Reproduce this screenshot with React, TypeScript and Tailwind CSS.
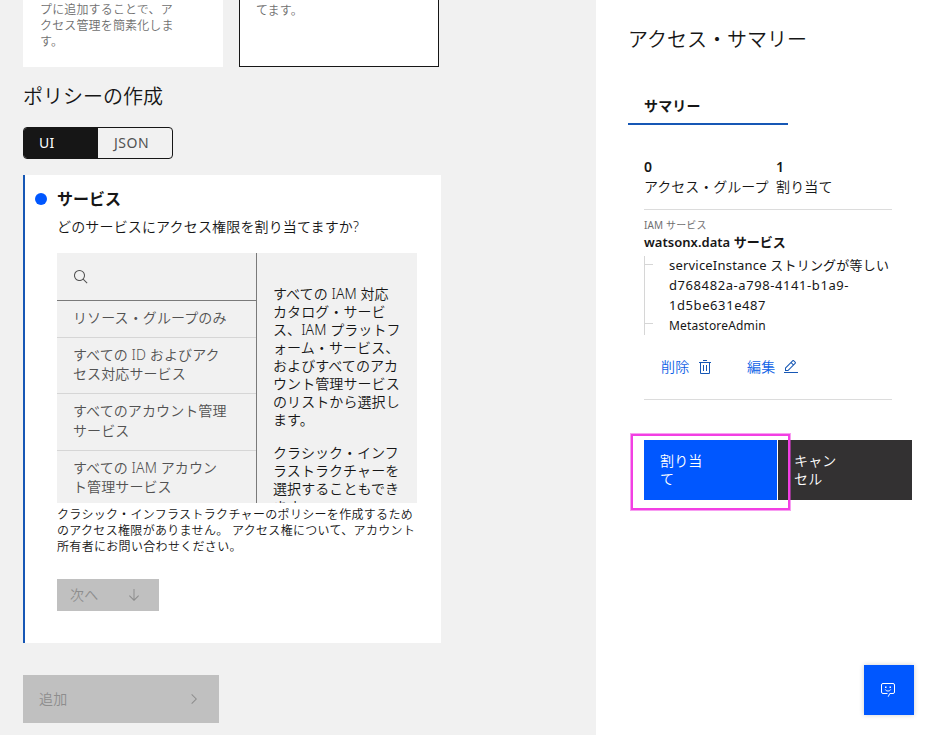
import { clsx } from 'clsx';
import type { ReactNode } from 'react';

const SERVICES: string[][] = [
  ['リソース・グループのみ'],
  ['すべての ID およびアク', 'セス対応サービス'],
  ['すべてのアカウント管理', 'サービス'],
  ['すべての IAM アカウン', 'ト管理サービス'],
];

const HELP: string[][] = [
  [
    'すべての IAM 対応',
    'カタログ・サービ',
    'ス、IAM プラットフ',
    'ォーム・サービス、',
    'およびすべてのアカ',
    'ウント管理サービス',
    'のリストから選択し',
    'ます。',
  ],
  ['クラシック・インフ', 'ラストラクチャーを', '選択することもでき', 'ます。'],
];

export default function App(): JSX.Element {
  return (
    <div className="relative flex h-[735px] w-[930px] overflow-hidden bg-[#f1f1f1] font-['Noto_Sans','Noto_Sans_CJK_JP',sans-serif] text-sm font-[350] tracking-[0.16px] whitespace-nowrap text-[#161616]">
      <main className="w-[596px] shrink-0 pl-[23px]">
        <div className="flex gap-4 text-xs/[16px] tracking-[0.15px] text-[#6f6f6f]">
          <div className="h-[67px] w-[200px] bg-white pt-[2.4px] pl-[17px]">
            <Lines lines={['プに追加することで、ア', 'クセス管理を簡素化しま', 'す。']} />
          </div>
          <div className="h-[67px] w-[200px] border border-t-0 border-[#161616] bg-white pt-[3px] pl-4">
            <Lines lines={['てます。']} />
          </div>
        </div>

        <h2 className="mt-4 text-xl/[28px] font-[350] tracking-normal">ポリシーの作成</h2>

        <div className="mt-4 flex h-8 w-[150px] overflow-hidden rounded border border-[#161616] font-normal">
          <button type="button" className="w-[74px] bg-[#161616] pl-[15px] text-left text-white">
            UI
          </button>
          <button type="button" className="flex-1 pl-4 text-left tracking-[0.5px] text-[#525252]">
            JSON
          </button>
        </div>

        <ServicePanel />

        <button
          type="button"
          className="mt-8 flex h-12 w-[196px] items-center justify-between bg-[#c0c0c0] pr-[17px] pb-px pl-4 text-[#8d8d8d]"
        >
          追加
          <Icon>
            <path d="M22 16 12 26 10.6 24.6 19.2 16 10.6 7.4 12 6z" />
          </Icon>
        </button>
      </main>

      <Summary />

      <button
        type="button"
        aria-label="チャット"
        className="absolute top-[665px] left-[864px] flex size-[50px] items-center justify-center bg-[#0057ff] text-white shadow-[0_0_5px_rgba(0,0,0,0.2)]"
      >
        <svg width="16" height="16" viewBox="0 0 16 16" fill="none" stroke="currentColor" className="mr-[2px]">
          <path d="M8.2 14.7 9.8 11.5H13a1.5 1.5 0 0 0 1.5-1.5V3A1.5 1.5 0 0 0 13 1.500H3A1.5 1.5 0 0 0 1.5 3v7A1.5 1.5 0 0 0 3 11.500H7.500" />
          <path d="M5.300 7.500c.4 1 1.400 1.500 2.700 1.500s2.300-.5 2.700-1.500" />
          <path d="M5 4.500h1.500v1.500H5zM9.500 4.500H11v1.500H9.500z" fill="currentColor" stroke="none" />
        </svg>
      </button>
    </div>
  );
}

function ServicePanel(): JSX.Element {
  return (
    <section className="mt-4 h-[468px] w-[418px] border-l-2 border-[#1657b5] bg-white pr-6 pl-[10px]">
      <div className="flex items-center gap-[10px] pt-3">
        <span className="size-3 rounded-full bg-[#0057ff]" />
        <h3 className="text-base/[24px] font-semibold tracking-normal">サービス</h3>
      </div>
      <div className="pl-[22px]">
        <p className="mt-[6px] leading-5">どのサービスにアクセス権限を割り当てますか?</p>

        <div className="mt-4 flex h-[250px] overflow-hidden bg-[#f1f1f1]">
          <div className="w-[200px] shrink-0 border-r border-[#7a7a7a] text-[#525252]">
            <div className="flex h-12 items-center border-b border-[#7a7a7a] pl-4">
              <Icon>
                <path d="M29 27.586l-7.552-7.552a11.018 11.018 0 1 0-1.414 1.414L27.586 29ZM4 13a9 9 0 1 1 9 9A9.01 9.01 0 0 1 4 13Z" />
              </Icon>
            </div>
            <ul>
              {SERVICES.map((lines) => (
                <li
                  key={lines[0]}
                  className="border-b border-[#d6d6d6] pt-[7px] pb-[9.2px] pl-4 leading-[19.6px] tracking-[0.1px]"
                >
                  <Lines lines={lines} />
                </li>
              ))}
            </ul>
          </div>
          <div className="pt-8 pl-4 leading-[18px] tracking-[0.08px]">
            {HELP.map((lines) => (
              <div key={lines[0]} className="mb-[15px]">
                <Lines lines={lines} />
              </div>
            ))}
          </div>
        </div>

        <div className="mt-1 text-xs/[16px] tracking-[0.32px]">
          <Lines
            lines={[
              'クラシック・インフラストラクチャーのポリシーを作成するため',
              'のアクセス権限がありません。 アクセス権について、アカウント',
              '所有者にお問い合わせください。',
            ]}
          />
        </div>

        <button
          type="button"
          className="mt-6 flex h-8 w-[102px] items-center justify-between bg-[#c0c0c0] pr-[17px] pl-[13px] text-[#8d8d8d]"
        >
          次へ
          <Icon>
            <path d="M24.590 16.590 17 24.170 17 4 15 4 15 24.170 7.410 16.590 6 18 16 28 26 18z" />
          </Icon>
        </button>
      </div>
    </section>
  );
}

function Summary(): JSX.Element {
  return (
    <aside className="flex-1 bg-white pt-[26px] pl-8">
      <h2 className="text-xl/[28px] font-[350] tracking-normal">アクセス・サマリー</h2>
      <div className="mt-[41px] h-[30px] w-40 border-b-2 border-[#1657b5] pt-px pl-4 font-semibold">サマリー</div>

      <div className="pl-4">
        <dl className="mt-8 flex h-[53px] w-[248px] border-b border-[#dcdcdc] leading-5">
          <div className="w-[132px]">
            <dt className="font-semibold">0</dt>
            <dd className="tracking-[0px]">アクセス・グループ</dd>
          </div>
          <div>
            <dt className="font-semibold">1</dt>
            <dd>割り当て</dd>
          </div>
        </dl>

        <p className="mt-[7px] text-[10px]/[16px] font-normal tracking-[0.15px] text-[#6f6f6f]">IAM サービス</p>
        <p className="text-[13px]/[18px] font-semibold tracking-[0.03px]">watsonx.data サービス</p>

        <ul className="mt-[5px] h-[79px] w-[248px] border-l border-[#d6d6d6] text-[13px]/[20px] font-normal">
          <Branch className="h-[59px]">
            <div className="-mt-px tracking-[0.2px]">serviceInstance ストリングが等しい</div>
            <div className="tracking-[0.58px]">
              <Lines lines={['d768482a-a798-4141-b1a9-', '1d5be631e487']} />
            </div>
          </Branch>
          <Branch>
            <span className="text-xs/[20px] tracking-[0.18px]">MetastoreAdmin</span>
          </Branch>
        </ul>

        <div className="mt-4 flex h-[49px] w-[248px] border-b border-[#dcdcdc] pl-[17px] text-[#0f62e6]">
          <button type="button" className="flex h-8 w-[86px] items-center gap-2">
            削除
            <Icon className="text-[#1657b5]">
              <path d="M12 12h2v12h-2zM18 12h2v12h-2zM12 2h8v2h-8z" />
              <path d="M4 6v2h2v20a2 2 0 0 0 2 2h16a2 2 0 0 0 2-2V8h2V6zM8 28V8h16v20z" />
            </Icon>
          </button>
          <button type="button" className="flex h-8 items-center gap-2">
            編集
            <Icon className="text-[#1657b5]">
              <path d="M2 26h28v2H2z" />
              <path d="M25.400 9c.8-.8.8-2 0-2.800l-3.600-3.600c-.8-.8-2-.8-2.800 0l-15 15V24h6.400zM20.400 4 24 7.600l-3 3L17.400 7zM6 22v-3.600l10-10 3.600 3.600-10 10z" />
            </Icon>
          </button>
        </div>

        <div className="relative mt-10 flex h-[60px] gap-px text-left leading-[18px] text-white">
          <button type="button" className="w-[133px] bg-[#0057ff] pb-px pl-4 text-left">
            <Lines lines={['割り当', 'て']} />
          </button>
          <button type="button" className="w-[134px] bg-[#333132] pb-px pl-4 text-left">
            <Lines lines={['キャン', 'セル']} />
          </button>
          <span className="absolute -top-[6px] -left-[13px] h-[76px] w-[159px] border-2 border-[#f23fe3] shadow-[0_0_0_1px_rgba(242,63,227,0.5)]" />
        </div>
      </div>
    </aside>
  );
}

function Branch({ className, children }: { className?: string; children: ReactNode }): JSX.Element {
  return (
    <li className={clsx('flex gap-4', className)}>
      <span className="mt-2 h-px w-2 bg-[#d6d6d6]" />
      <div>{children}</div>
    </li>
  );
}

function Lines({ lines }: { lines: string[] }): JSX.Element {
  return (
    <>
      {lines.map((line) => (
        <p key={line}>{line}</p>
      ))}
    </>
  );
}

function Icon({ className, children }: { className?: string; children: ReactNode }): JSX.Element {
  return (
    <svg width="16" height="16" viewBox="0 0 32 32" fill="currentColor" className={className}>
      {children}
    </svg>
  );
}
